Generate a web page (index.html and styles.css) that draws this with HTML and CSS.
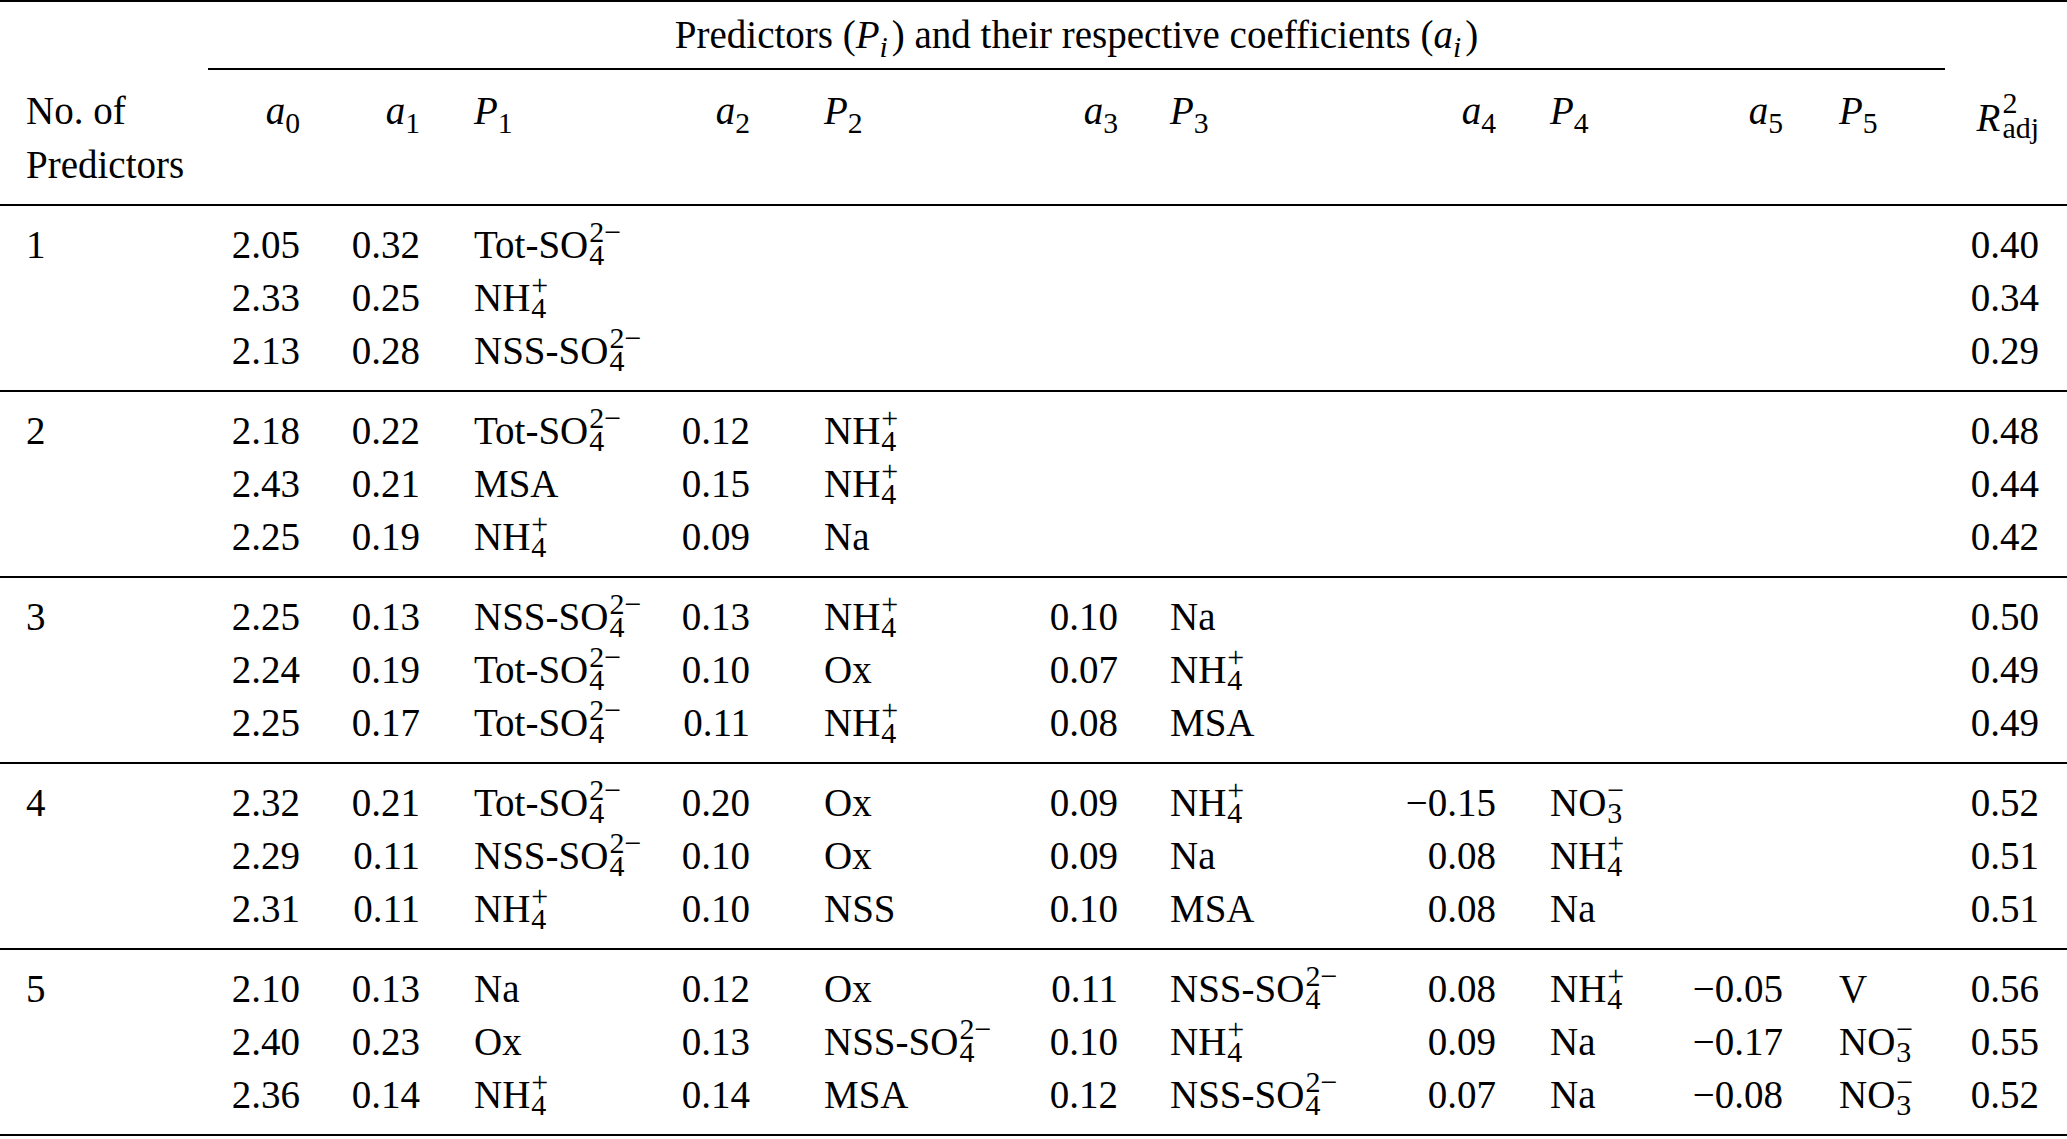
FILE: index.html
```html
<!DOCTYPE html>
<html lang="en">
<head>
<meta charset="utf-8">
<title>Predictors table</title>
<link rel="stylesheet" href="styles.css">
</head>
<body>
<table class="tbl">
  <colgroup>
    <col class="w-c0"><col class="w-a0"><col class="w-a1"><col class="w-p1"><col class="w-a2"><col class="w-p2"><col class="w-a3"><col class="w-p3"><col class="w-a4"><col class="w-p4"><col class="w-a5"><col class="w-p5"><col class="w-r">
  </colgroup>
  <thead>
    <tr class="top">
      <th></th>
      <th colspan="11" class="title">Predictors (<i>P</i><sub class="isub">i</sub>) and their respective coefficients (<i>a</i><sub class="isub">i</sub>)</th>
      <th></th>
    </tr>
    <tr class="r head">
      <th>No. of<br>Predictors</th>
      <th><i>a</i><sub>0</sub></th>
      <th><i>a</i><sub>1</sub></th>
      <th><i>P</i><sub>1</sub></th>
      <th><i>a</i><sub>2</sub></th>
      <th><i>P</i><sub>2</sub></th>
      <th><i>a</i><sub>3</sub></th>
      <th><i>P</i><sub>3</sub></th>
      <th><i>a</i><sub>4</sub></th>
      <th><i>P</i><sub>4</sub></th>
      <th><i>a</i><sub>5</sub></th>
      <th><i>P</i><sub>5</sub></th>
      <th><span class="rsym"><i>R</i><span class="st rst"><span>2</span><span>adj</span></span></span></th>
    </tr>
  </thead>
  <tbody>
    <tr class="r first"><td>1</td><td>2.05</td><td>0.32</td><td>Tot-SO<span class="st"><span>2−</span><span>4</span></span></td><td></td><td></td><td></td><td></td><td></td><td></td><td></td><td></td><td>0.40</td></tr>
    <tr class="r"><td></td><td>2.33</td><td>0.25</td><td>NH<span class="st"><span>+</span><span>4</span></span></td><td></td><td></td><td></td><td></td><td></td><td></td><td></td><td></td><td>0.34</td></tr>
    <tr class="r last"><td></td><td>2.13</td><td>0.28</td><td>NSS-SO<span class="st"><span>2−</span><span>4</span></span></td><td></td><td></td><td></td><td></td><td></td><td></td><td></td><td></td><td>0.29</td></tr>
  </tbody>
  <tbody>
    <tr class="r first"><td>2</td><td>2.18</td><td>0.22</td><td>Tot-SO<span class="st"><span>2−</span><span>4</span></span></td><td>0.12</td><td>NH<span class="st"><span>+</span><span>4</span></span></td><td></td><td></td><td></td><td></td><td></td><td></td><td>0.48</td></tr>
    <tr class="r"><td></td><td>2.43</td><td>0.21</td><td>MSA</td><td>0.15</td><td>NH<span class="st"><span>+</span><span>4</span></span></td><td></td><td></td><td></td><td></td><td></td><td></td><td>0.44</td></tr>
    <tr class="r last"><td></td><td>2.25</td><td>0.19</td><td>NH<span class="st"><span>+</span><span>4</span></span></td><td>0.09</td><td>Na</td><td></td><td></td><td></td><td></td><td></td><td></td><td>0.42</td></tr>
  </tbody>
  <tbody>
    <tr class="r first"><td>3</td><td>2.25</td><td>0.13</td><td>NSS-SO<span class="st"><span>2−</span><span>4</span></span></td><td>0.13</td><td>NH<span class="st"><span>+</span><span>4</span></span></td><td>0.10</td><td>Na</td><td></td><td></td><td></td><td></td><td>0.50</td></tr>
    <tr class="r"><td></td><td>2.24</td><td>0.19</td><td>Tot-SO<span class="st"><span>2−</span><span>4</span></span></td><td>0.10</td><td>Ox</td><td>0.07</td><td>NH<span class="st"><span>+</span><span>4</span></span></td><td></td><td></td><td></td><td></td><td>0.49</td></tr>
    <tr class="r last"><td></td><td>2.25</td><td>0.17</td><td>Tot-SO<span class="st"><span>2−</span><span>4</span></span></td><td>0.11</td><td>NH<span class="st"><span>+</span><span>4</span></span></td><td>0.08</td><td>MSA</td><td></td><td></td><td></td><td></td><td>0.49</td></tr>
  </tbody>
  <tbody>
    <tr class="r first"><td>4</td><td>2.32</td><td>0.21</td><td>Tot-SO<span class="st"><span>2−</span><span>4</span></span></td><td>0.20</td><td>Ox</td><td>0.09</td><td>NH<span class="st"><span>+</span><span>4</span></span></td><td>−0.15</td><td>NO<span class="st"><span>−</span><span>3</span></span></td><td></td><td></td><td>0.52</td></tr>
    <tr class="r"><td></td><td>2.29</td><td>0.11</td><td>NSS-SO<span class="st"><span>2−</span><span>4</span></span></td><td>0.10</td><td>Ox</td><td>0.09</td><td>Na</td><td>0.08</td><td>NH<span class="st"><span>+</span><span>4</span></span></td><td></td><td></td><td>0.51</td></tr>
    <tr class="r last"><td></td><td>2.31</td><td>0.11</td><td>NH<span class="st"><span>+</span><span>4</span></span></td><td>0.10</td><td>NSS</td><td>0.10</td><td>MSA</td><td>0.08</td><td>Na</td><td></td><td></td><td>0.51</td></tr>
  </tbody>
  <tbody>
    <tr class="r first"><td>5</td><td>2.10</td><td>0.13</td><td>Na</td><td>0.12</td><td>Ox</td><td>0.11</td><td>NSS-SO<span class="st"><span>2−</span><span>4</span></span></td><td>0.08</td><td>NH<span class="st"><span>+</span><span>4</span></span></td><td>−0.05</td><td>V</td><td>0.56</td></tr>
    <tr class="r"><td></td><td>2.40</td><td>0.23</td><td>Ox</td><td>0.13</td><td>NSS-SO<span class="st"><span>2−</span><span>4</span></span></td><td>0.10</td><td>NH<span class="st"><span>+</span><span>4</span></span></td><td>0.09</td><td>Na</td><td>−0.17</td><td>NO<span class="st"><span>−</span><span>3</span></span></td><td>0.55</td></tr>
    <tr class="r last"><td></td><td>2.36</td><td>0.14</td><td>NH<span class="st"><span>+</span><span>4</span></span></td><td>0.14</td><td>MSA</td><td>0.12</td><td>NSS-SO<span class="st"><span>2−</span><span>4</span></span></td><td>0.07</td><td>Na</td><td>−0.08</td><td>NO<span class="st"><span>−</span><span>3</span></span></td><td>0.52</td></tr>
  </tbody>
</table>
</body>
</html>
```

FILE: styles.css
```css
html, body {
  margin: 0;
  padding: 0;
  background: #ffffff;
}

body {
  font-family: "Liberation Serif", "Times New Roman", serif;
  font-size: 39px;
  color: #000000;
}

.tbl {
  border-collapse: separate;
  border-spacing: 0;
  table-layout: fixed;
  width: 2067px;
}

.w-c0 { width: 208px; }
.w-a0 { width: 102px; }
.w-a1 { width: 120px; }
.w-p1 { width: 220px; }
.w-a2 { width: 110px; }
.w-p2 { width: 240px; }
.w-a3 { width: 128px; }
.w-p3 { width: 232px; }
.w-a4 { width: 146px; }
.w-p4 { width: 174px; }
.w-a5 { width: 113px; }
.w-p5 { width: 152px; }
.w-r  { width: 122px; }

th, td {
  padding: 0;
  font-weight: normal;
  white-space: nowrap;
  vertical-align: top;
  text-align: left;
  line-height: 53px;
}

/* top rule + spanning title with partial rule */
.top > th {
  border-top: 2px solid #000;
  line-height: 66px;
}

.top > .title {
  text-align: center;
  border-bottom: 2px solid #000;
}

/* column alignment */
.r > :nth-child(1) { padding-left: 26px; }
.r > :nth-child(2),
.r > :nth-child(3),
.r > :nth-child(5),
.r > :nth-child(7),
.r > :nth-child(9),
.r > :nth-child(11) {
  text-align: right;
  padding-right: 10px;
}
.r > :nth-child(4)  { padding-left: 44px; }
.r > :nth-child(6)  { padding-left: 64px; }
.r > :nth-child(8)  { padding-left: 42px; }
.r > :nth-child(10) { padding-left: 44px; }
.r > :nth-child(12) { padding-left: 46px; }
.r > :nth-child(13) {
  text-align: right;
  padding-right: 28px;
}

/* header row */
.head > th {
  line-height: 54px;
  padding-top: 14px;
  padding-bottom: 12px;
  border-bottom: 2px solid #000;
}

/* body groups */
.first > td { padding-top: 12px; }
.last > td {
  padding-bottom: 13px;
  border-bottom: 2px solid #000;
}

/* scripts */
sub {
  font-size: 0.76em;
  line-height: 0;
  vertical-align: -9px;
}

sub.isub {
  font-style: italic;
  padding-right: 4px;
}

.st {
  display: inline-flex;
  flex-direction: column;
  align-items: flex-start;
  text-align: left;
  font-size: 0.77em;
  line-height: 23px;
  vertical-align: 16px;
  margin-left: 1px;
}

.rsym {
  display: inline-block;
  vertical-align: -7px;
}

.rst {
  line-height: 25px;
  vertical-align: 18px;
  margin-left: 2px;
}
```
